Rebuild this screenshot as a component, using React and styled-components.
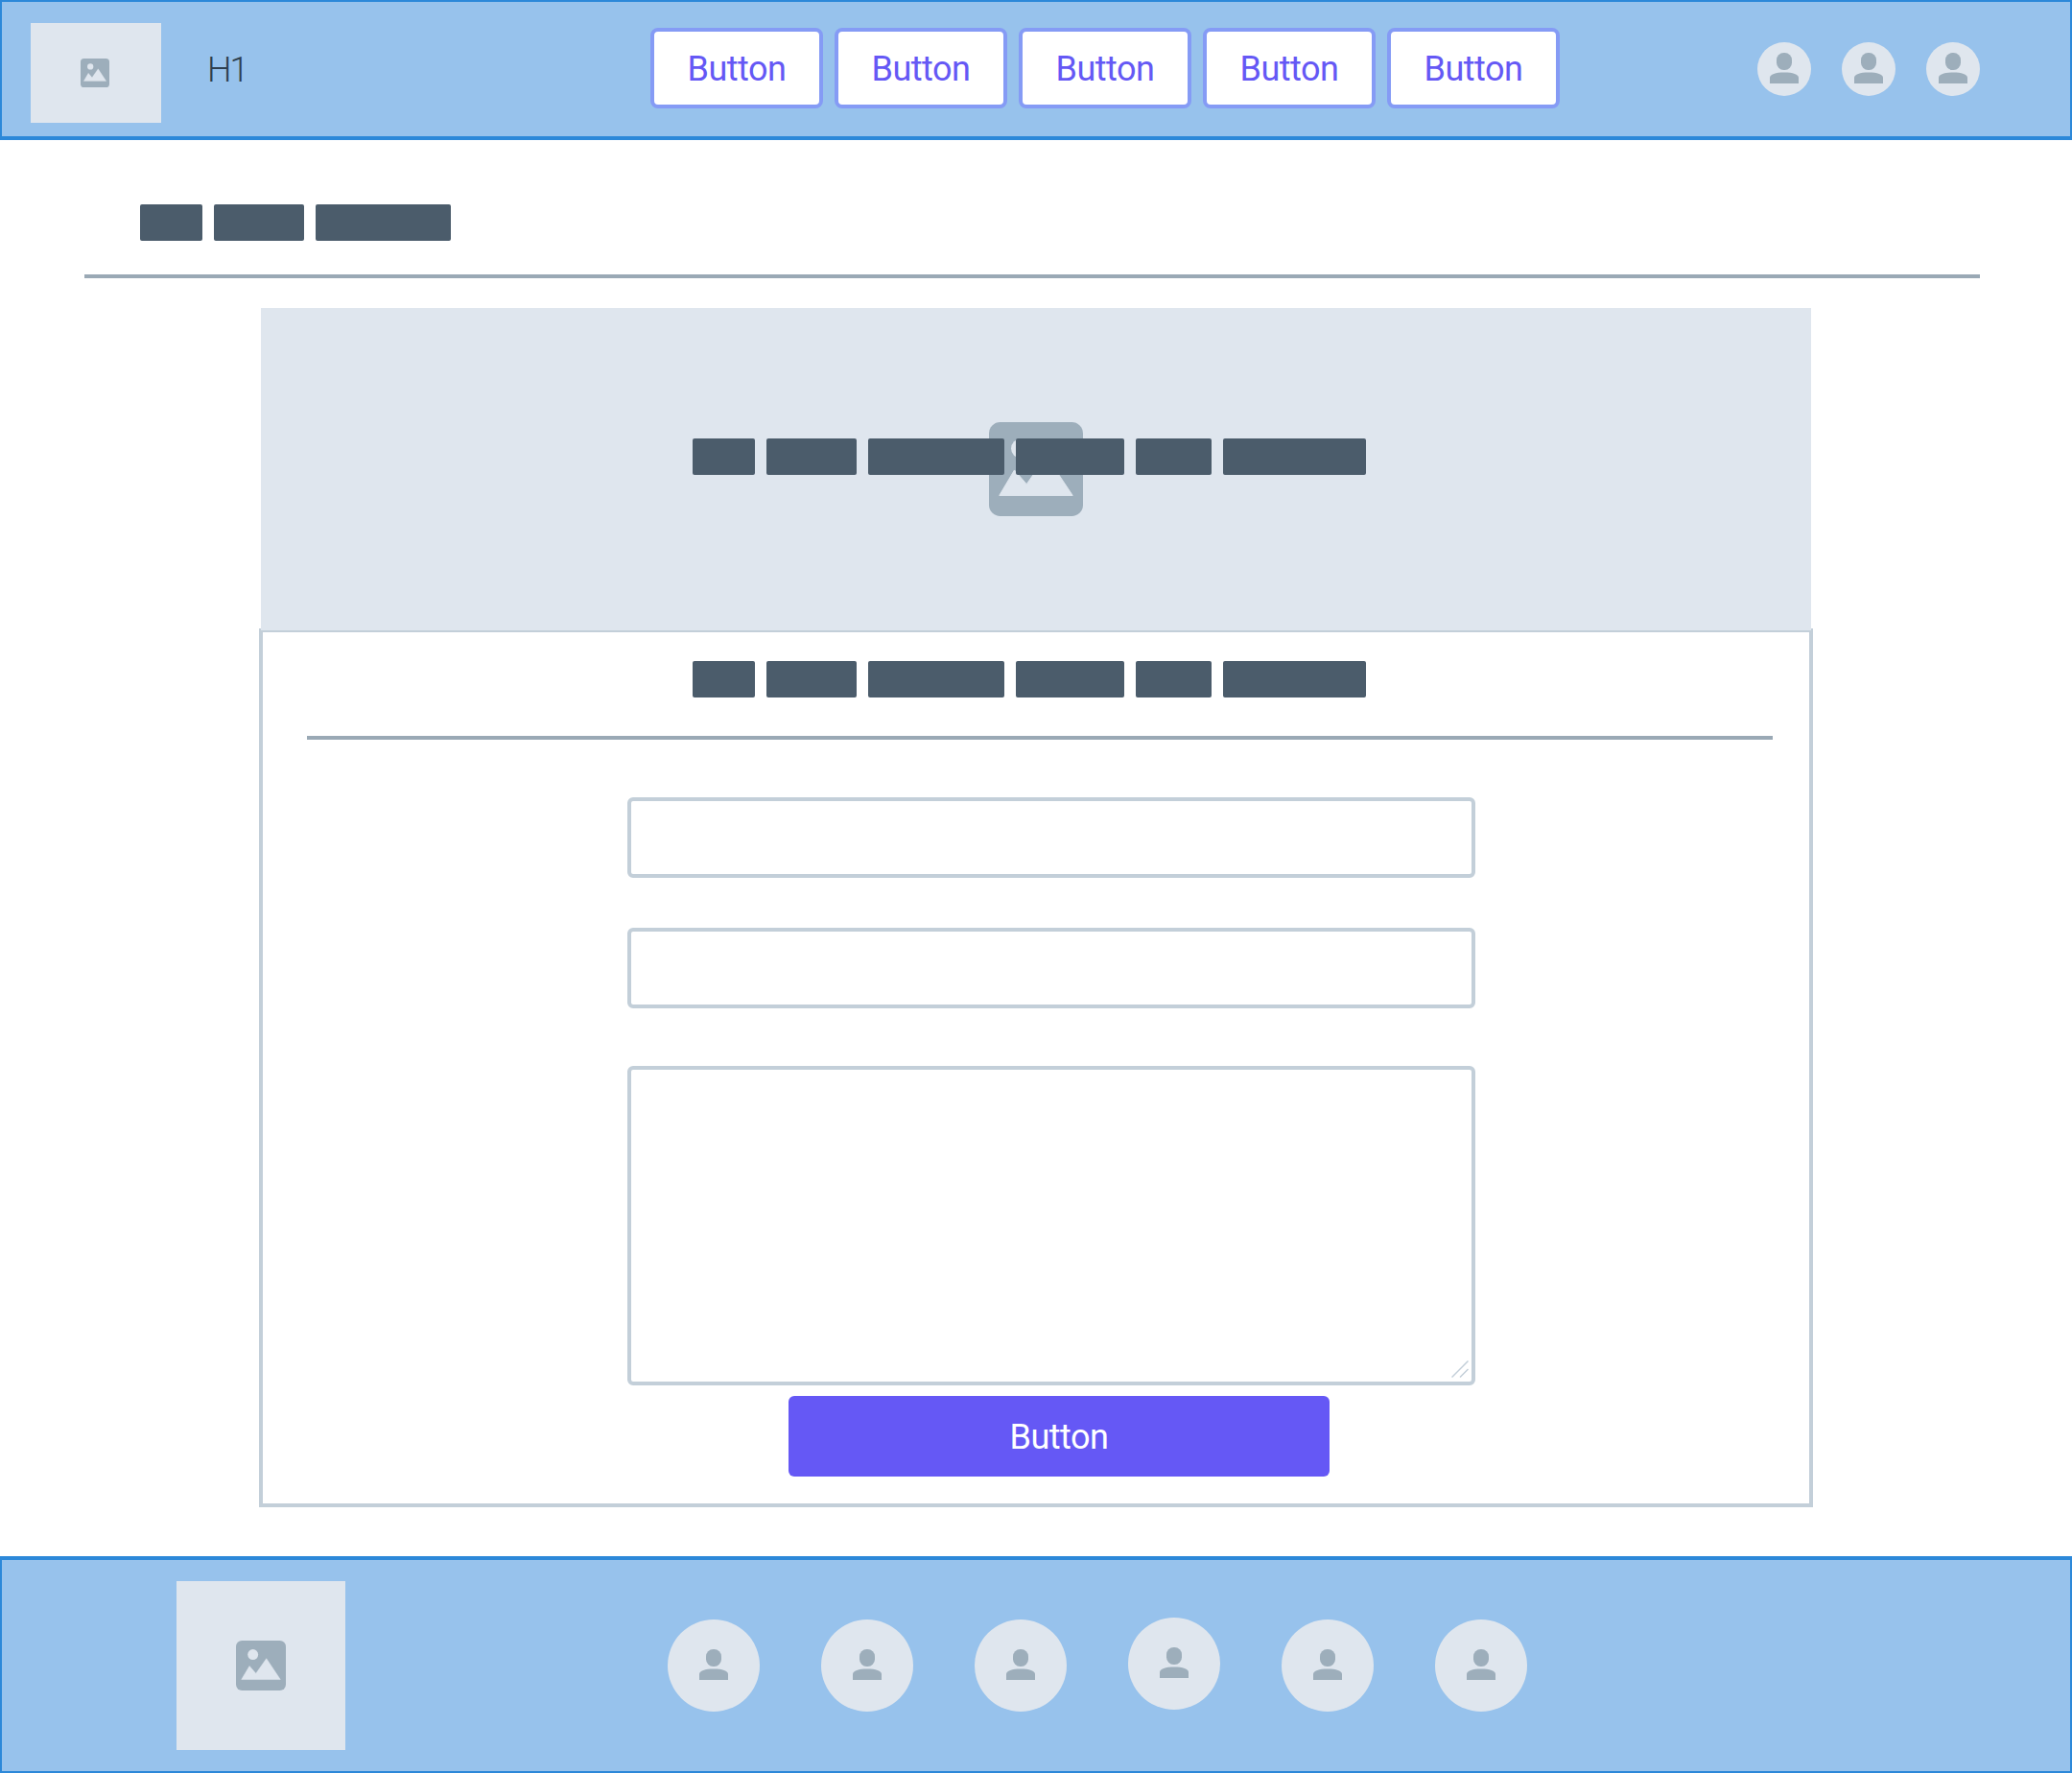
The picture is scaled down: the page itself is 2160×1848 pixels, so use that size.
import React from 'react';
import styled, { createGlobalStyle } from 'styled-components';

const GlobalStyle = createGlobalStyle`
  html, body {
    margin: 0;
    padding: 0;
    background: #fff;
  }
  * {
    box-sizing: border-box;
  }
`;

const crumbs = [65, 94, 141];
const heading = [65, 94, 142, 113, 79, 149];

const ImageIcon = ({ size }) => (
  <svg width={size} height={size} viewBox="0 0 100 100">
    <rect width="100" height="100" rx="12" fill="#9daebb" />
    <ellipse cx="34" cy="28" rx="10.5" ry="10.5" fill="#dfe6ee" />
    <path
      d="M11 78 L27 51 L40 66 L61 36 L89 78 Z"
      fill="#dfe6ee"
      stroke="#dfe6ee"
      strokeWidth="1"
      strokeLinejoin="round"
    />
  </svg>
);

const UserIcon = () => (
  <svg width="30" height="32" viewBox="0 0 30 32">
    <rect x="7" y="0" width="16" height="18" rx="7.5" fill="#9daebb" />
    <path d="M0 32 V26 C0 22.5 6 20.5 15 20.5 C24 20.5 30 22.5 30 26 V32 Z" fill="#9daebb" />
  </svg>
);

const App = () => (
  <Page>
    <GlobalStyle />
    <Nav>
      <NavLogo>
        <ImageIcon size={30} />
      </NavLogo>
      <Title>H1</Title>
      <NavButtons>
        {[0, 1, 2, 3, 4].map((i) => (
          <OutlineButton key={i}>Button</OutlineButton>
        ))}
      </NavButtons>
      <NavAvatars>
        {[0, 1, 2].map((i) => (
          <NavAvatar key={i}>
            <UserIcon />
          </NavAvatar>
        ))}
      </NavAvatars>
    </Nav>

    <Crumbs>
      {crumbs.map((w, i) => (
        <Block key={i} $width={w} />
      ))}
    </Crumbs>
    <TopRule />

    <Hero>
      <ImageIcon size={98} />
      <HeroTitle>
        {heading.map((w, i) => (
          <Block key={i} $width={w} />
        ))}
      </HeroTitle>
    </Hero>

    <Panel>
      <PanelTitle>
        {heading.map((w, i) => (
          <Block key={i} $width={w} />
        ))}
      </PanelTitle>
      <PanelRule />
      <Form>
        <Field type="text" />
        <Field type="text" $top={52} />
        <AreaWrap>
          <Area />
          <Grip width="18" height="18" viewBox="0 0 18 18">
            <path d="M0.5 17.5 L17.5 0.5 M9 17.5 L17.5 9" stroke="#c3cfd9" strokeWidth="1.5" fill="none" />
          </Grip>
        </AreaWrap>
        <Submit type="button">Button</Submit>
      </Form>
    </Panel>

    <Footer>
      <FooterLogo>
        <ImageIcon size={52} />
      </FooterLogo>
      <FooterAvatars>
        {[0, 1, 2, 3, 4, 5].map((i) => (
          <FooterAvatar key={i} $raised={i === 3}>
            <UserIcon />
          </FooterAvatar>
        ))}
      </FooterAvatars>
    </Footer>
  </Page>
);

const Page = styled.div`
  width: 2160px;
  height: 1848px;
  overflow: hidden;
  font-family: Roboto, "Liberation Sans", sans-serif;
`;

const Nav = styled.header`
  display: flex;
  align-items: center;
  height: 146px;
  padding: 0 94px 0 30px;
  background: #97c2ec;
  border: solid #2c88d9;
  border-width: 2px 2px 4px;
`;

const NavLogo = styled.div`
  display: flex;
  align-items: center;
  justify-content: center;
  width: 136px;
  height: 104px;
  margin-top: 8px;
  background: #dfe6ee;

  svg {
    margin-right: 2px;
  }
`;

const Title = styled.h1`
  width: 80px;
  margin: 1px 0 0 48px;
  font-size: 36px;
  font-weight: 300;
  line-height: 42px;
  letter-spacing: -2px;
  color: #2e3f4f;
`;

const NavButtons = styled.div`
  display: flex;
  gap: 12px;
  margin: -2px 0 0 382px;
`;

const OutlineButton = styled.button`
  width: 180px;
  height: 84px;
  padding: 2px 0 0;
  background: #fff;
  border: 4px solid #859bf5;
  border-radius: 8px;
  font-family: inherit;
  font-size: 36px;
  letter-spacing: -0.5px;
  color: #6558f5;
`;

const NavAvatars = styled.div`
  display: flex;
  gap: 32px;
  margin-left: auto;
`;

const NavAvatar = styled.div`
  display: flex;
  align-items: center;
  justify-content: center;
  width: 56px;
  height: 56px;
  border-radius: 50%;
  background: #dfe6ee;

  svg {
    margin-top: -2px;
  }
`;

const Crumbs = styled.div`
  display: flex;
  gap: 12px;
  padding: 67px 0 0 146px;
`;

const Block = styled.div`
  width: ${(p) => p.$width}px;
  height: 38px;
  border-radius: 2px;
  background: #4b5c6b;
`;

const TopRule = styled.div`
  width: 1976px;
  height: 4px;
  margin: 35px 0 31px 88px;
  background: #9aa9b5;
`;

const Hero = styled.div`
  position: relative;
  z-index: 1;
  display: flex;
  align-items: center;
  justify-content: center;
  width: 1616px;
  height: 336px;
  margin: 0 0 -2px 272px;
  background: #dfe6ee;
`;

const HeroTitle = styled.div`
  position: absolute;
  top: 136px;
  left: 450px;
  display: flex;
  gap: 12px;
`;

const Panel = styled.section`
  width: 1620px;
  height: 916px;
  margin: 0 0 51px 270px;
  border: 4px solid #c3cfd9;
`;

const PanelTitle = styled.div`
  display: flex;
  gap: 12px;
  padding: 30px 0 0 448px;
`;

const PanelRule = styled.div`
  width: 1528px;
  height: 4px;
  margin: 40px 0 60px 46px;
  background: #9aa9b5;
`;

const Form = styled.form`
  display: flex;
  flex-direction: column;
  align-items: flex-start;
  padding-left: 380px;
`;

const Field = styled.input`
  display: block;
  width: 884px;
  height: 84px;
  margin-top: ${(p) => p.$top || 0}px;
  background: #fff;
  border: 4px solid #c3cfd9;
  border-radius: 6px;
  outline: none;
`;

const AreaWrap = styled.div`
  position: relative;
  width: 884px;
  height: 333px;
  margin-top: 60px;
`;

const Area = styled.textarea`
  display: block;
  width: 100%;
  height: 100%;
  background: #fff;
  border: 4px solid #c3cfd9;
  border-radius: 6px;
  outline: none;
  resize: none;
`;

const Grip = styled.svg`
  position: absolute;
  right: 7px;
  bottom: 8px;
`;

const Submit = styled.button`
  width: 564px;
  height: 84px;
  margin: 11px 0 0 168px;
  padding: 1px 0 0;
  background: #6558f5;
  border: none;
  border-radius: 6px;
  font-family: inherit;
  font-size: 36px;
  letter-spacing: -0.5px;
  color: #fff;
`;

const Footer = styled.footer`
  display: flex;
  align-items: center;
  height: 226px;
  padding-left: 182px;
  background: #97c2ec;
  border: solid #2c88d9;
  border-width: 4px 2px 2px;
`;

const FooterLogo = styled.div`
  display: flex;
  align-items: center;
  justify-content: center;
  width: 176px;
  height: 176px;
  background: #dfe6ee;

  svg {
    margin-right: 1px;
  }
`;

const FooterAvatars = styled.div`
  display: flex;
  gap: 64px;
  margin-left: 336px;
`;

const FooterAvatar = styled.div`
  display: flex;
  align-items: center;
  justify-content: center;
  width: 96px;
  height: 96px;
  border-radius: 50%;
  background: #dfe6ee;
  transform: translateY(${(p) => (p.$raised ? -2 : 0)}px);

  svg {
    margin-top: -2px;
  }
`;

export default App;
